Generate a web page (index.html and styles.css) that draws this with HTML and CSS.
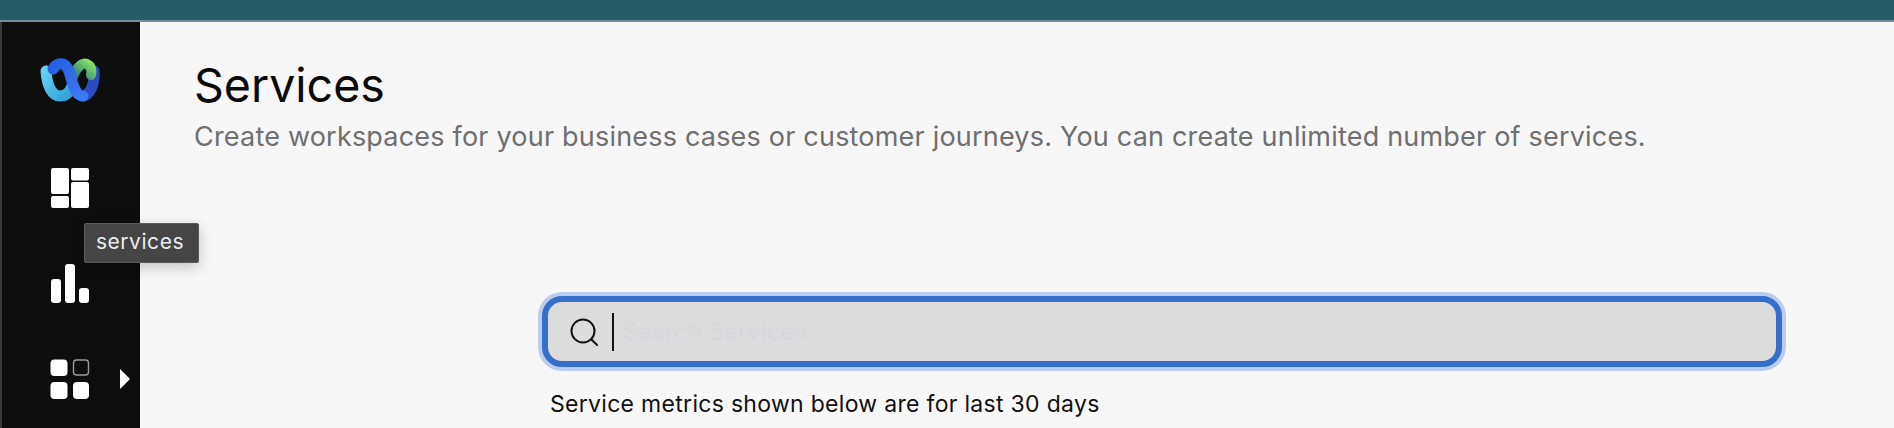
FILE: index.html
```html
<!DOCTYPE html>
<html lang="en">
<head>
<meta charset="utf-8">
<title>Services</title>
<link rel="stylesheet" href="styles.css">
</head>
<body>
<div class="topbar"></div>
<div class="shell">
  <nav class="sidebar">
    <svg class="logo" width="60" height="44" viewBox="0 0 60 44">
      <defs>
        <linearGradient id="lg1" x1="0" y1="0" x2="1" y2="1"><stop offset="0" stop-color="#62d2f0"/><stop offset="1" stop-color="#2f9fd8"/></linearGradient>
        <linearGradient id="lg2" x1="0" y1="0" x2="1" y2="1"><stop offset="0" stop-color="#2560e0"/><stop offset="1" stop-color="#3b7af7"/></linearGradient>
        <linearGradient id="lg3" x1="0" y1="1" x2="1" y2="0"><stop offset="0" stop-color="#2c6f8c"/><stop offset="1" stop-color="#80e060"/></linearGradient>
      </defs>
      <path d="M54 13C55 26 50 38 42 38" fill="none" stroke="#2a4cc0" stroke-width="11" stroke-linecap="round"/>
      <path d="M33 19C36 9 43 4 47 6C51 8 52 12 51 17" fill="none" stroke="url(#lg3)" stroke-width="10" stroke-linecap="round"/>
      <path d="M6 13C7 28 12 38 20 38C26 38 30 34 32 28" fill="none" stroke="url(#lg1)" stroke-width="11" stroke-linecap="round"/>
      <path d="M13 11C16 5 24 3 28 11C32 19 33 38 43 38" fill="none" stroke="url(#lg2)" stroke-width="11" stroke-linecap="round"/>
    </svg>
    <svg class="nav-services" width="40" height="40" viewBox="0 0 40 40" fill="#fff">
      <rect x="1" y="0" width="18" height="26" rx="2"/>
      <rect x="21" y="0" width="18" height="12.500" rx="2"/>
      <rect x="21" y="14" width="18" height="26" rx="2"/>
      <rect x="1" y="28" width="18" height="12" rx="2"/>
    </svg>
    <div class="tooltip">services</div>
    <svg class="nav-chart" width="40" height="40" viewBox="0 0 40 40" fill="#fff">
      <rect x="1" y="15" width="10" height="24" rx="3"/>
      <rect x="15" y="0" width="10" height="39" rx="3"/>
      <rect x="29" y="24" width="10" height="15" rx="3"/>
    </svg>
    <div class="nav-apps">
      <svg width="40" height="40" viewBox="0 0 40 40">
        <rect x="0.500" y="0.500" width="17" height="16.500" rx="4" fill="#fff"/>
        <rect x="23.500" y="1" width="15" height="15" rx="3" fill="none" stroke="#9a9a9a" stroke-width="1.4"/>
        <rect x="0.500" y="23" width="17" height="17" rx="4" fill="#fff"/>
        <rect x="23" y="23" width="16" height="17" rx="4" fill="#fff"/>
      </svg>
      <span class="caret"></span>
    </div>
  </nav>
  <main class="content">
    <h1 class="title">Services</h1>
    <p class="subtitle">Create workspaces for your business cases or customer journeys. You can create unlimited number of services.</p>
    <div class="search-area">
      <div class="search">
        <svg width="28" height="28" viewBox="0 0 28 28" fill="none" stroke="#111" stroke-width="2">
          <circle cx="13" cy="13" r="11.500"/>
          <path d="M21.500 21.500L27 27" stroke-linecap="round"/>
        </svg>
        <span class="cursor"></span>
        <span class="placeholder">Search Services</span>
      </div>
      <p class="metrics">Service metrics shown below are for last 30 days</p>
    </div>
  </main>
</div>
</body>
</html>
```
FILE: styles.css
```css
* { box-sizing: border-box; }
html, body { margin: 0; height: 100%; overflow: hidden; }
body {
  display: flex;
  flex-direction: column;
  background: #f7f7f7;
  font-family: Inter, "Liberation Sans", sans-serif;
}
.topbar {
  height: 22px;
  flex: none;
  background: #265c63;
  border-bottom: 2px solid #6a9298;
}
.shell { flex: 1; display: flex; min-height: 0; }
.sidebar {
  position: relative;
  width: 140px;
  flex: none;
  display: flex;
  flex-direction: column;
  align-items: flex-start;
  background: #0d0d0d;
  border-left: 2px solid #3a3a3a;
  padding-top: 36px;
}
.logo { margin-left: 38px; }
.nav-services { margin-top: 66px; margin-left: 48px; }
.nav-chart { margin-top: 56px; margin-left: 48px; }
.nav-apps {
  display: flex;
  align-items: center;
  margin-top: 55px;
  margin-left: 48px;
  gap: 30px;
}
.caret {
  width: 0;
  height: 0;
  border-left: 10px solid #fff;
  border-top: 10px solid transparent;
  border-bottom: 10px solid transparent;
}
.tooltip {
  position: absolute;
  left: 82px;
  top: 201px;
  width: 115px;
  height: 40px;
  padding-right: 3px;
  background: #454545;
  border: 1px solid #5c5c5c;
  border-radius: 2px;
  color: #ececec;
  font-size: 21px;
  letter-spacing: 0.55px;
  line-height: 36px;
  text-align: center;
  box-shadow: 0 4px 14px rgba(0, 0, 0, 0.22);
  z-index: 2;
}
.content { flex: 1; min-width: 0; padding: 35px 0 0 54px; }
.title {
  margin: 0;
  font-size: 46.500px;
  font-weight: 400;
  line-height: 56px;
  color: #0a0a0a;
}
.subtitle {
  margin: 6px 0 0;
  font-size: 27px;
  letter-spacing: 0.2px;
  line-height: 36px;
  color: #6f6f6f;
}
.search-area { margin: 141px 0 0 348px; width: 1240px; }
.search {
  display: flex;
  align-items: center;
  width: 1240px;
  height: 71px;
  padding-left: 22px;
  background: #dcdcdc;
  border: 6px solid #346fca;
  border-radius: 20px;
  box-shadow: 0 0 0 4px #bbcdec;
}
.cursor { width: 2px; height: 38px; background: #111; margin-left: 14px; }
.placeholder { margin-left: 8px; font-size: 24px; color: #d8d8dc; }
.metrics {
  margin: 22px 0 0 8px;
  font-size: 23px;
  letter-spacing: 0.3px;
  line-height: 30px;
  color: #111;
}
```
